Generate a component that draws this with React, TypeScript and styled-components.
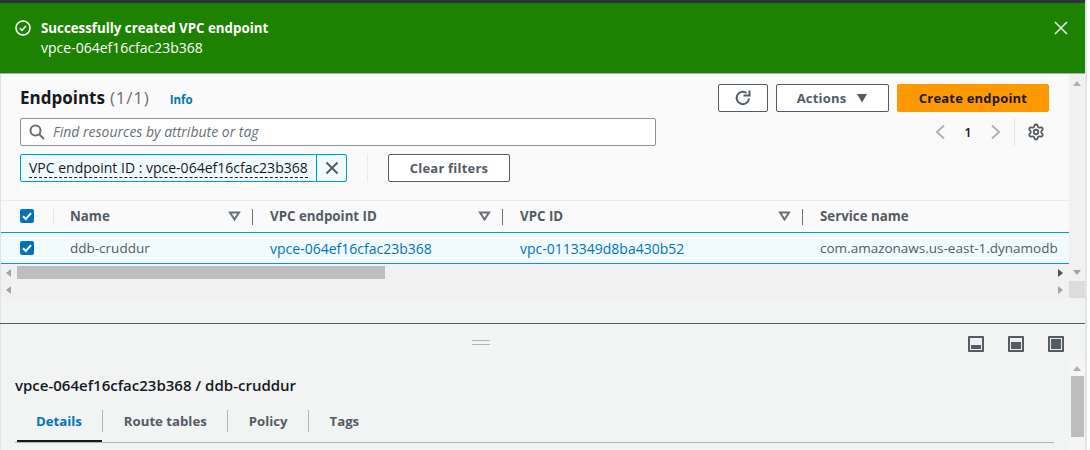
import React from "react";
import styled, { createGlobalStyle } from "styled-components";
import { Settings } from "lucide-react";

const GlobalStyle = createGlobalStyle`
  html, body {
    margin: 0;
    padding: 0;
    background: #ffffff;
  }
  body {
    font-family: "Open Sans", "Liberation Sans", sans-serif;
    font-size: 14px;
    color: #16191f;
  }
`;

const Page = styled.div`
  width: 1087px;
  height: 450px;
  box-sizing: border-box;
  border-right: 2px solid #e4e4e4;
  overflow: hidden;
  display: flex;
  flex-direction: column;
`;

const TopBar = styled.div`
  height: 3px;
  background: #2a3342;
`;

const Flash = styled.div`
  height: 70px;
  box-sizing: border-box;
  background: #1d8102;
  color: #ffffff;
  display: flex;
  align-items: flex-start;
  padding: 15px 17px 0 15px;
  gap: 10px;
`;

const FlashText = styled.div`
  flex: 1;
  line-height: 20px;
  font-size: 14px;
`;

const FlashTitle = styled.div`
  font-size: 13.3px;
  font-weight: 700;
`;

const FlashIcon = styled.svg`
  margin-top: 2px;
`;

const FlashClose = styled.svg`
  margin-top: 3px;
`;

const Rule = styled.div`
  height: 1px;
  background: #a9b4a6;
`;

const Main = styled.div`
  height: 249px;
  display: flex;
`;

const Content = styled.div`
  flex: 1;
  min-width: 0;
  background: #fafafa;
  border-left: 1px solid #e0e4e4;
  display: flex;
  flex-direction: column;
`;

const Header = styled.div`
  padding: 10px 20px 18px 19px;
  display: flex;
  flex-direction: column;
`;

const HeaderRow = styled.div<{ $top?: number }>`
  height: 28px;
  margin-top: ${({ $top }) => $top ?? 0}px;
  display: flex;
  align-items: center;
`;

const Heading = styled.div`
  font-size: 17px;
  font-weight: 700;
  color: #16191f;
  flex: 1;
  display: flex;
  align-items: baseline;
  padding-bottom: 2px;
`;

const Count = styled.span`
  font-weight: 400;
  color: #687078;
  margin-left: 5px;
  letter-spacing: 0.8px;
`;

const InfoLink = styled.span`
  font-size: 11.5px;
  font-weight: 700;
  color: #0073bb;
  margin-left: 20px;
`;

const Button = styled.button<{ $width: number; $primary?: boolean; $left?: number }>`
  width: ${({ $width }) => $width}px;
  height: 28px;
  box-sizing: border-box;
  margin-left: ${({ $left }) => $left ?? 0}px;
  padding: 0;
  display: flex;
  align-items: center;
  justify-content: center;
  gap: 10px;
  border-radius: 2px;
  border: 1px solid ${({ $primary }) => ($primary ? "#ff9900" : "#545b64")};
  background: ${({ $primary }) => ($primary ? "#ff9900" : "#ffffff")};
  color: ${({ $primary }) => ($primary ? "#16191f" : "#545b64")};
  font-family: inherit;
  font-size: 13px;
  font-weight: 700;
  letter-spacing: 0.2px;
`;

const SearchBox = styled.div`
  width: 636px;
  height: 28px;
  box-sizing: border-box;
  background: #ffffff;
  border: 1px solid #879596;
  border-radius: 2px;
  display: flex;
  align-items: center;
  padding-left: 8px;
  gap: 8px;
`;

const SearchText = styled.span`
  font-size: 14px;
  line-height: 18px;
  font-style: italic;
  color: #687078;
  margin-bottom: 1px;
`;

const Pager = styled.div`
  margin-left: auto;
  display: flex;
  align-items: center;
  height: 28px;
  padding-right: 4px;
`;

const PageNumber = styled.span`
  font-size: 13px;
  font-weight: 600;
  color: #16191f;
  width: 44px;
  text-align: center;
`;

const PagerRule = styled.div`
  width: 1px;
  height: 28px;
  background: #e3e6e6;
  margin: 0 12px;
`;

const Token = styled.div`
  width: 327px;
  height: 28px;
  box-sizing: border-box;
  border: 1px solid #00a1c9;
  border-radius: 2px;
  background: #f1faff;
  display: flex;
  align-items: center;
`;

const TokenLabel = styled.div`
  flex: 1;
  padding-left: 8px;
  font-size: 14px;
  line-height: 18px;
  white-space: nowrap;
  color: #16191f;
`;

const TokenText = styled.span`
  border-bottom: 1px dashed #16191f;
`;

const TokenClose = styled.div`
  width: 29px;
  height: 26px;
  border-left: 1px solid #00a1c9;
  display: flex;
  align-items: center;
  justify-content: center;
`;

const FilterRule = styled.div`
  width: 1px;
  height: 28px;
  background: #e9ebed;
  margin: 0 20px;
`;

const columns = "69px 200px 250px 300px 1fr";

const HeadRow = styled.div`
  display: grid;
  grid-template-columns: ${columns};
  height: 32px;
  box-sizing: border-box;
  border-top: 1px solid #eaeded;
  padding-bottom: 2px;
  align-items: center;
  font-size: 13.3px;
  font-weight: 700;
  color: #545b64;
`;

const HeadCell = styled.div`
  position: relative;
  height: 100%;
  display: flex;
  align-items: center;
`;

const CheckCell = styled.div`
  padding-left: 19px;
  position: relative;
  height: 100%;
  display: flex;
  align-items: center;
`;

const CheckDivider = styled.div`
  position: absolute;
  left: 52px;
  top: 8px;
  width: 1px;
  height: 15px;
  background: #e3e6e6;
`;

const SortIcon = styled.svg`
  position: absolute;
  right: 29px;
  top: 10px;
`;

const ColumnDivider = styled.div`
  position: absolute;
  right: 17px;
  top: 8px;
  width: 1px;
  height: 16px;
  background: #687078;
`;

const BodyRow = styled.div`
  display: grid;
  grid-template-columns: ${columns};
  height: 32px;
  box-sizing: border-box;
  background: #f1faff;
  border-top: 1px solid #00a1c9;
  border-bottom: 1px solid #00a1c9;
  align-items: center;
  font-size: 13.5px;
  color: #545b64;
`;

const Link = styled.span`
  color: #0073bb;
  font-size: 14px;
`;

const Cell = styled.div`
  white-space: nowrap;
`;

const Checkbox = styled.span`
  width: 14px;
  height: 14px;
  border-radius: 2px;
  background: #0073bb;
  display: inline-flex;
  align-items: center;
  justify-content: center;
`;

const TableScroll = styled.div`
  height: 34px;
  background: #f1f1f1;
  display: flex;
  flex-direction: column;
`;

const ScrollLine = styled.div`
  height: 17px;
  display: flex;
  align-items: center;
  padding: 0 6px 0 5px;
  gap: 6px;
`;

const Thumb = styled.div`
  width: 368px;
  height: 13px;
  background: #bdbdbd;
`;

const Arrow = styled.span<{ $dir: "left" | "right"; $color: string; $push?: boolean }>`
  width: 0;
  height: 0;
  border-top: 4px solid transparent;
  border-bottom: 4px solid transparent;
  margin-left: ${({ $push }) => ($push ? "auto" : "0")};
  ${({ $dir, $color }) =>
    $dir === "left"
      ? `border-right: 5px solid ${$color};`
      : `border-left: 5px solid ${$color};`}
`;

const Filler = styled.div`
  flex: 1;
  background: #f2f3f3;
`;

const PageScroll = styled.div`
  width: 16px;
  background: #f2f3f3;
  display: flex;
  flex-direction: column;
`;

const ScrollTrack = styled.div`
  height: 224px;
  background: #f1f1f1;
  display: flex;
  flex-direction: column;
  align-items: center;
`;

const TrackSpace = styled.div<{ $height: number }>`
  height: ${({ $height }) => $height}px;
  flex: none;
`;

const Caret = styled.span<{ $up?: boolean }>`
  width: 0;
  height: 0;
  border-left: 4px solid transparent;
  border-right: 4px solid transparent;
  ${({ $up }) =>
    $up ? "border-bottom: 5px solid #b0b0b0;" : "border-top: 5px solid #a3a3a3;"}
`;

const ScrollCorner = styled.div`
  width: 100%;
  height: 17px;
  margin-top: auto;
  background: #dcdcdc;
`;

const SplitPanel = styled.div`
  flex: 1;
  min-height: 0;
  border-top: 1px solid #545b64;
  background: #f2f3f3;
  display: flex;
`;

const SplitContent = styled.div`
  flex: 1;
  min-width: 0;
  padding: 12px 15px 0 14px;
  border-left: 1px solid #e0e4e4;
  display: flex;
  flex-direction: column;
`;

const SplitTop = styled.div`
  display: flex;
  height: 16px;
  position: relative;
  justify-content: flex-end;
  gap: 24px;
  margin-right: -10px;
`;

const DragHandle = styled.div`
  position: absolute;
  left: 457px;
  top: 4px;
  width: 18px;
  height: 3px;
  border-top: 1px solid #aab7b8;
  border-bottom: 1px solid #aab7b8;
`;

const SplitTitle = styled.div`
  font-size: 15px;
  font-weight: 600;
  color: #16191f;
  line-height: 20px;
  margin-top: 23px;
`;

const Tabs = styled.div`
  margin-top: 12px;
  width: 1037px;
  height: 35px;
  box-sizing: content-box;
  padding-left: 2px;
  display: flex;
  border-bottom: 1px solid #aab7b8;
`;

const Tab = styled.div<{ $active?: boolean; $last?: boolean }>`
  padding: 0 20px 0 ${({ $active }) => ($active ? 19 : 21)}px;
  height: 22px;
  margin-top: 3px;
  display: flex;
  align-items: center;
  font-size: 13.2px;
  font-weight: 700;
  color: ${({ $active }) => ($active ? "#0073bb" : "#545b64")};
  border-right: ${({ $last }) => ($last ? "0" : "1px solid #aab7b8")};
  position: relative;
`;

const TabUnderline = styled.div`
  position: absolute;
  left: 0;
  right: 0;
  bottom: -10px;
  height: 2px;
  background: #16191f;
`;

const SplitScroll = styled.div`
  width: 16px;
  background: #f5f5f5;
  margin-top: 35px;
  display: flex;
  flex-direction: column;
  align-items: center;
`;

const SplitThumb = styled.div`
  width: 13px;
  height: 61px;
  background: #bdbdbd;
`;

const Check = () => (
  <svg width="14" height="14" viewBox="0 0 14 14">
    <path d="M3 7.2l2.8 2.8L11 4.2" fill="none" stroke="#fff" strokeWidth="2" />
  </svg>
);

const Sort = () => (
  <SortIcon width="13" height="10" viewBox="0 0 13 10">
    <path d="M2 1.5h9L6.5 8.5z" fill="none" stroke="#687078" strokeWidth="2" />
  </SortIcon>
);

const Chevron = ({ left }: { left?: boolean }) => (
  <svg width="12" height="16" viewBox="0 0 12 16">
    <path
      d={left ? "M10 1.5L3 8l7 6.5" : "M2 1.5L9 8l-7 6.5"}
      fill="none"
      stroke="#aab7b8"
      strokeWidth="2"
    />
  </svg>
);

// the three split panel position icons differ only by how much is filled
const PanelIcon = ({ fill }: { fill: number }) => (
  <svg width="16" height="16" viewBox="0 0 16 16">
    <rect x="0" y="0" width="16" height="16" rx="1" fill="#545b64" />
    <rect x="2" y="2" width="12" height="12" fill="#eef0f0" />
    <rect x="3" y={13 - fill} width="10" height={fill} fill="#545b64" />
  </svg>
);

export default function App() {
  return (
    <Page>
      <GlobalStyle />
      <TopBar />
      <Flash>
        <FlashIcon width="16" height="16" viewBox="0 0 16 16">
          <circle cx="8" cy="8" r="7" fill="none" stroke="#fff" strokeWidth="1.6" />
          <path d="M4.8 8.2l2.2 2.2 4-4.4" fill="none" stroke="#fff" strokeWidth="1.6" />
        </FlashIcon>
        <FlashText>
          <FlashTitle>Successfully created VPC endpoint</FlashTitle>
          <div>vpce-064ef16cfac23b368</div>
        </FlashText>
        <FlashClose width="14" height="14" viewBox="0 0 14 14">
          <path d="M1 1l12 12M13 1L1 13" stroke="#e8efe6" strokeWidth="1.6" />
        </FlashClose>
      </Flash>
      <Rule />
      <Main>
        <Content>
          <Header>
            <HeaderRow>
              <Heading>
                Endpoints<Count>(1/1)</Count>
                <InfoLink>Info</InfoLink>
              </Heading>
              <Button $width={50}>
                <svg width="18" height="18" viewBox="0 0 18 18">
                  <path
                    d="M15 9.5A6.2 6.2 0 1 1 12.6 4"
                    fill="none"
                    stroke="#545b64"
                    strokeWidth="2"
                  />
                  <path d="M9.5 6.5h6v-5" fill="none" stroke="#545b64" strokeWidth="2" />
                </svg>
              </Button>
              <Button $width={113} $left={8}>
                Actions
                <svg width="12" height="9" viewBox="0 0 12 9">
                  <path d="M1 0h10L6 8.5z" fill="#545b64" />
                </svg>
              </Button>
              <Button $width={152} $left={8} $primary>
                Create endpoint
              </Button>
            </HeaderRow>
            <HeaderRow $top={6}>
              <SearchBox>
                <svg width="16" height="16" viewBox="0 0 16 16">
                  <circle cx="6.5" cy="6.5" r="5" fill="none" stroke="#687078" strokeWidth="2" />
                  <path d="M10 10l5 5" stroke="#687078" strokeWidth="2" />
                </svg>
                <SearchText>Find resources by attribute or tag</SearchText>
              </SearchBox>
              <Pager>
                <Chevron left />
                <PageNumber>1</PageNumber>
                <Chevron />
                <PagerRule />
                <Settings size={18} color="#545b64" strokeWidth={2.4} />
              </Pager>
            </HeaderRow>
            <HeaderRow $top={8}>
              <Token>
                <TokenLabel>
                  <TokenText>VPC endpoint ID : vpce-064ef16cfac23b368</TokenText>
                </TokenLabel>
                <TokenClose>
                  <svg width="14" height="14" viewBox="0 0 14 14">
                    <path d="M1.5 1.5l11 11M12.5 1.5l-11 11" stroke="#545b64" strokeWidth="2" />
                  </svg>
                </TokenClose>
              </Token>
              <FilterRule />
              <Button $width={122}>Clear filters</Button>
            </HeaderRow>
          </Header>
          <HeadRow>
            <CheckCell>
              <Checkbox>
                <Check />
              </Checkbox>
              <CheckDivider />
            </CheckCell>
            <HeadCell>
              Name
              <Sort />
              <ColumnDivider />
            </HeadCell>
            <HeadCell>
              VPC endpoint ID
              <Sort />
              <ColumnDivider />
            </HeadCell>
            <HeadCell>
              VPC ID
              <Sort />
              <ColumnDivider />
            </HeadCell>
            <HeadCell>Service name</HeadCell>
          </HeadRow>
          <BodyRow>
            <CheckCell>
              <Checkbox>
                <Check />
              </Checkbox>
            </CheckCell>
            <Cell>ddb-cruddur</Cell>
            <Cell>
              <Link>vpce-064ef16cfac23b368</Link>
            </Cell>
            <Cell>
              <Link>vpc-0113349d8ba430b52</Link>
            </Cell>
            <Cell>com.amazonaws.us-east-1.dynamodb</Cell>
          </BodyRow>
          <TableScroll>
            <ScrollLine>
              <Arrow $dir="left" $color="#a3a3a3" />
              <Thumb />
              <Arrow $dir="right" $color="#505050" $push />
            </ScrollLine>
            <ScrollLine>
              <Arrow $dir="left" $color="#a3a3a3" />
              <Arrow $dir="right" $color="#a3a3a3" $push />
            </ScrollLine>
          </TableScroll>
          <Filler />
        </Content>
        <PageScroll>
          <ScrollTrack>
            <TrackSpace $height={7} />
            <Caret $up />
            <TrackSpace $height={184} />
            <Caret />
            <ScrollCorner />
          </ScrollTrack>
        </PageScroll>
      </Main>
      <SplitPanel>
        <SplitContent>
          <SplitTop>
            <DragHandle />
            <PanelIcon fill={4} />
            <PanelIcon fill={7} />
            <PanelIcon fill={10} />
          </SplitTop>
          <SplitTitle>vpce-064ef16cfac23b368 / ddb-cruddur</SplitTitle>
          <Tabs>
            <Tab $active>
              Details
              <TabUnderline />
            </Tab>
            <Tab>Route tables</Tab>
            <Tab>Policy</Tab>
            <Tab $last>Tags</Tab>
          </Tabs>
        </SplitContent>
        <SplitScroll>
          <TrackSpace $height={7} />
          <Caret $up />
          <TrackSpace $height={5} />
          <SplitThumb />
        </SplitScroll>
      </SplitPanel>
    </Page>
  );
}
